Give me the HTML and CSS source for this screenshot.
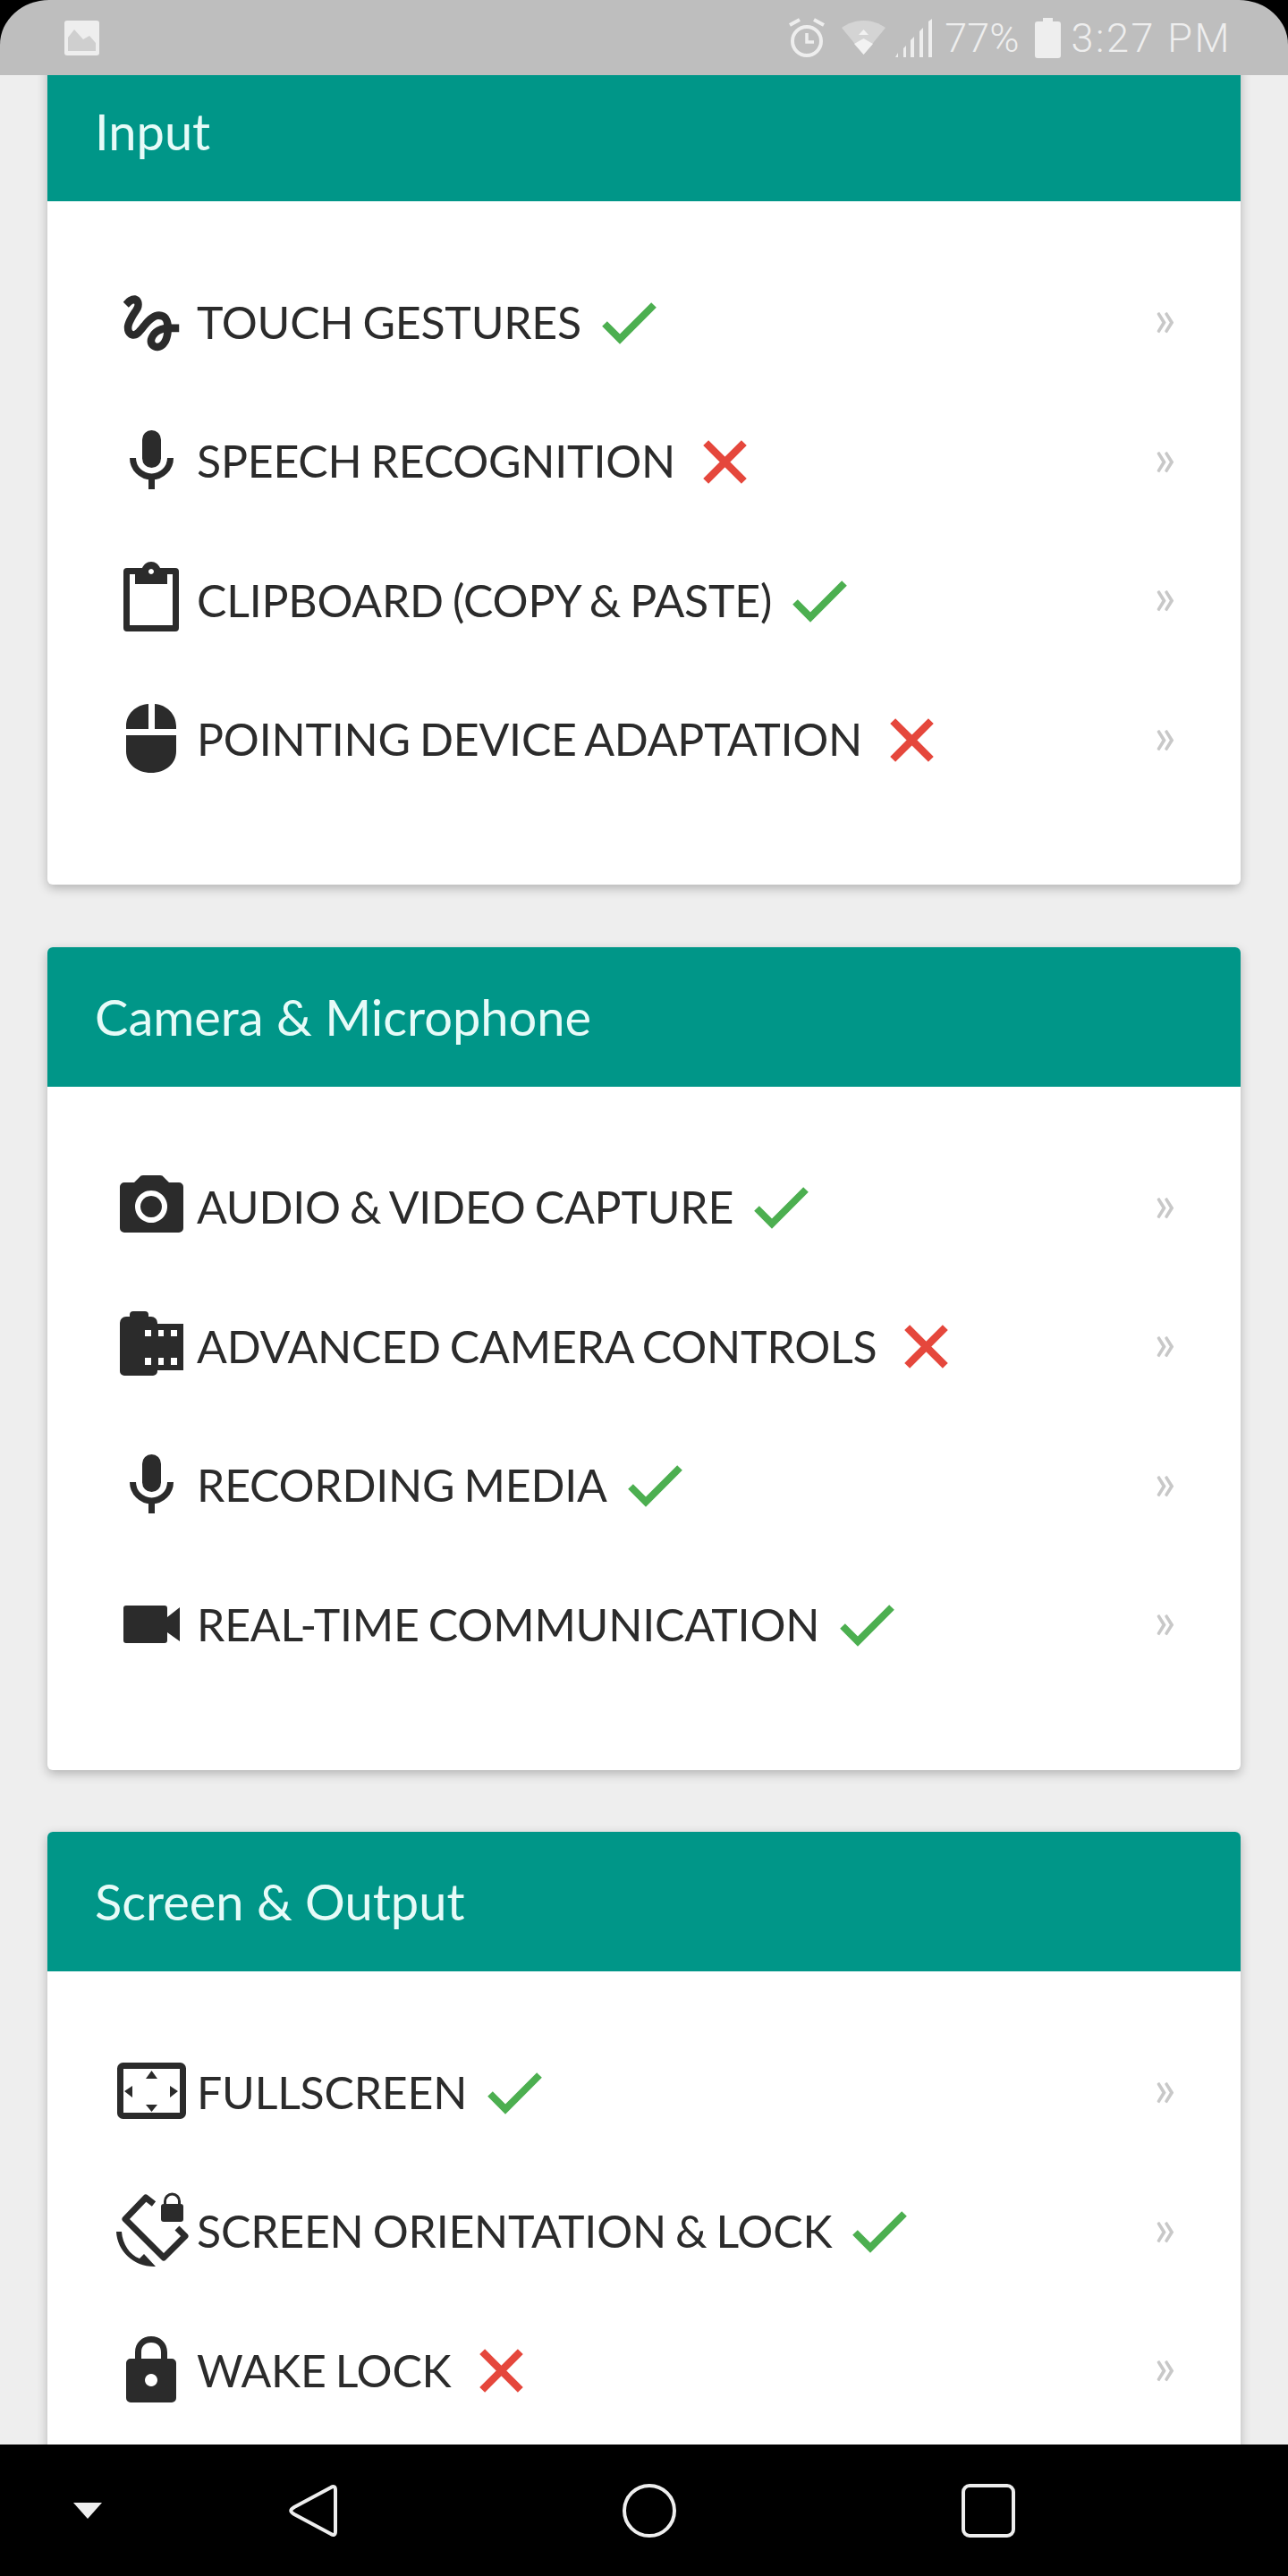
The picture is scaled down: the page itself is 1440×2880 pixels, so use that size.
FILE: index.html
```html
<!DOCTYPE html>
<html lang="en">
<head>
<meta charset="utf-8">
<title>Device features</title>
<link rel="stylesheet" href="styles.css">
</head>
<body>
<svg class="sprite" width="0" height="0" aria-hidden="true">
  <defs>
    <symbol id="yes" viewBox="0 0 61 47"><path d="M3 24 L20 41 L58 3" fill="none" stroke="#4caf50" stroke-width="8"/></symbol>
    <symbol id="no" viewBox="0 0 49 49"><path d="M4 4 L45 45 M45 4 L4 45" fill="none" stroke="#e5473c" stroke-width="8"/></symbol>
    <symbol id="mic" viewBox="0 0 80 80" overflow="visible"><rect x="31" y="6" width="21" height="42" rx="10.500" fill="#2b2b2b"/><path d="M20.500 37 a21 21 0 0 0 42 0" fill="none" stroke="#2b2b2b" stroke-width="7"/><rect x="38" y="58" width="7" height="14" fill="#2b2b2b"/></symbol>
  </defs>
</svg>

<header class="status">
  <div class="status-bar">
    <svg width="39" height="39" viewBox="0 0 39 39"><path d="M3 0H36a3 3 0 0 1 3 3V36a3 3 0 0 1-3 3H3a3 3 0 0 1-3-3V3a3 3 0 0 1 3-3Z" fill="#eee"/><path d="M4 19 11 10 21 21 28 17 35 25V34H4Z" fill="#cfcfcf"/></svg>
    <div class="st-right">
      <svg class="st-alarm" width="42" height="44" viewBox="0 0 42 44"><circle cx="21" cy="26" r="16" fill="none" stroke="#eee" stroke-width="4"/><path d="M21 17V27H29" fill="none" stroke="#eee" stroke-width="3.500"/><path d="M2 8 13 2M40 8 29 2" stroke="#eee" stroke-width="4"/></svg>
      <svg class="st-wifi" width="49" height="38" viewBox="0 0 49 38"><path d="M0 8C7 3 15 0 24.500 0S42 3 49 8L24.500 38Z" fill="#d4d4d4"/><path d="M24.500 10 19 16H30ZM14 26 24.500 38 35 26 24.500 20Z" fill="#f2f2f2"/></svg>
      <svg class="st-sig" width="43" height="43" viewBox="0 0 43 43"><path d="M0 43 3 38V43ZM9 43V33L12 30V43ZM17 43V24L21 20V43ZM27 43V14L31 10V43ZM37 43V3L41 0V43Z" fill="#eee"/></svg>
      <span class="st-pct">77%</span>
      <svg class="st-bat" width="29" height="45" viewBox="0 0 29 45"><path d="M9 0H20V4H26a3 3 0 0 1 3 3V42a3 3 0 0 1-3 3H3a3 3 0 0 1-3-3V7a3 3 0 0 1 3-3H9Z" fill="#eee"/></svg>
      <span class="st-time">3:27 PM</span>
    </div>
  </div>
</header>

<main class="page">
  <section class="card">
    <h2 class="card-title">Input</h2>
    <ul class="list">
      <li class="row"><span class="ic"><svg width="80" height="80" viewBox="0 0 80 80"><path transform="scale(3.440)" d="M4.590 6.890c.7-.71 1.400-1.350 1.710-1.220.5.2 0 1.030-.3 1.520-.25.42-2.860 3.890-2.860 6.310 0 1.280.48 2.340 1.340 2.980.75.56 1.740.73 2.640.46 1.070-.31 1.950-1.400 3.060-2.770 1.210-1.490 2.830-3.440 4.080-3.440 1.630 0 1.650 1.010 1.760 1.790-3.780.64-5.380 3.670-5.380 5.370 0 1.700 1.440 3.090 3.210 3.090 1.630 0 4.290-1.330 4.690-6.100H21v-2.500h-2.470c-.15-1.650-1.090-4.200-4.030-4.200-2.250 0-4.180 1.910-4.940 2.840-.58.73-2.060 2.480-2.290 2.720-.25.3-.68.84-1.110.84-.45 0-.72-.83-.36-1.920.35-1.090 1.400-2.860 1.850-3.520.78-1.140 1.300-1.920 1.300-3.280C8.950 3.690 7.310 3 6.440 3 5.120 3 3.970 4 3.720 4.250c-.36.36-.66.66-.88.93l1.750 1.710zm9.290 11.660c-.31 0-.74-.26-.74-.72 0-.6.73-2.200 2.870-2.760-.3 2.690-1.430 3.480-2.130 3.480z" fill="#2b2b2b"/></svg></span><span class="label">TOUCH GESTURES</span><svg class="mark-yes"><use href="#yes"/></svg><span class="more">»</span></li>
      <li class="row"><span class="ic"><svg width="80" height="80"><use href="#mic"/></svg></span><span class="label">SPEECH RECOGNITION</span><svg class="mark-no"><use href="#no"/></svg><span class="more">»</span></li>
      <li class="row"><span class="ic"><svg width="80" height="80" viewBox="0 0 80 80"><path fill-rule="evenodd" d="M14 4H31C33 0 36 -3 41 -3S49 0 51 4H68a4 4 0 0 1 4 4V71a4 4 0 0 1-4 4H14a4 4 0 0 1-4-4V8a4 4 0 0 1 4-4ZM17 11V68H65V11H59V22H23V11ZM41 5a3 3 0 1 0 .01 0Z" fill="#2b2b2b"/></svg></span><span class="label">CLIPBOARD (COPY &amp; PASTE)</span><svg class="mark-yes"><use href="#yes"/></svg><span class="more">»</span></li>
      <li class="row"><span class="ic"><svg width="80" height="80" viewBox="0 0 80 80"><path d="M38 1V29H13V26C13 12 24 2 38 1ZM45 1C58 2 69 12 69 26V29H45ZM13 36H69V54C69 68 57 78 41 78S13 68 13 54Z" fill="#2b2b2b"/></svg></span><span class="label">POINTING DEVICE ADAPTATION</span><svg class="mark-no"><use href="#no"/></svg><span class="more">»</span></li>
    </ul>
  </section>

  <section class="card">
    <h2 class="card-title">Camera &amp; Microphone</h2>
    <ul class="list">
      <li class="row"><span class="ic"><svg width="80" height="80" viewBox="0 0 80 80"><path fill-rule="evenodd" d="M11 13H22L28 7Q29 5 32 5H51Q54 5 55 7L61 13H72a5 5 0 0 1 5 5V64a5 5 0 0 1-5 5H11a5 5 0 0 1-5-5V18a5 5 0 0 1 5-5ZM41 22a18 18 0 1 0 .01 0ZM41 28a12 12 0 1 1-.01 0Z" fill="#2b2b2b"/></svg></span><span class="label">AUDIO &amp; VIDEO CAPTURE</span><svg class="mark-yes"><use href="#yes"/></svg><span class="more">»</span></li>
      <li class="row"><span class="ic"><svg width="80" height="80" viewBox="0 0 80 80"><path fill-rule="evenodd" d="M17 5a4 4 0 0 1 4-4H34a4 4 0 0 1 4 4V7H41a7 7 0 0 1 7 7V15H77V67H48V68a5 5 0 0 1-5 5H11a5 5 0 0 1-5-5V14a7 7 0 0 1 7-7H17ZM34 22v7h7v-7ZM49 22v7h6v-7ZM63 22v7h7v-7ZM34 53v8h7v-8ZM49 53v8h6v-8ZM63 53v8h7v-8Z" fill="#2b2b2b"/></svg></span><span class="label">ADVANCED CAMERA CONTROLS</span><svg class="mark-no"><use href="#no"/></svg><span class="more">»</span></li>
      <li class="row"><span class="ic"><svg width="80" height="80"><use href="#mic"/></svg></span><span class="label">RECORDING MEDIA</span><svg class="mark-yes"><use href="#yes"/></svg><span class="more">»</span></li>
      <li class="row"><span class="ic"><svg width="80" height="80" viewBox="0 0 80 80"><path d="M13 19H56a3 3 0 0 1 3 3V58a3 3 0 0 1-3 3H13a3 3 0 0 1-3-3V22a3 3 0 0 1 3-3ZM59 32 73 21V59L59 49Z" fill="#2b2b2b"/></svg></span><span class="label">REAL-TIME COMMUNICATION</span><svg class="mark-yes"><use href="#yes"/></svg><span class="more">»</span></li>
    </ul>
  </section>

  <section class="card">
    <h2 class="card-title">Screen &amp; Output</h2>
    <ul class="list">
      <li class="row"><span class="ic"><svg width="80" height="80" viewBox="0 0 80 80"><rect x="6.500" y="10.500" width="70" height="56" rx="3" fill="none" stroke="#2b2b2b" stroke-width="7"/><path d="M41.500 16 48 25H35ZM41.500 62 48 54H35ZM11 39 20 33V46ZM71 39 62 33V46Z" fill="#2b2b2b"/></svg></span><span class="label">FULLSCREEN</span><svg class="mark-yes"><use href="#yes"/></svg><span class="more">»</span></li>
      <li class="row"><span class="ic"><svg width="80" height="80" viewBox="0 0 80 80"><path d="M44 10 35 3 12 27 55 70 79 46 70 37" fill="none" stroke="#2b2b2b" stroke-width="7" stroke-linejoin="round"/><path d="M2 41H8C9 55 17 67 28 71L33 66 46 80C22 81 3 63 2 41Z" fill="#2b2b2b"/><rect x="52" y="10" width="25" height="20" rx="3" fill="#2b2b2b"/><path d="M56.500 12V7a8 8 0 0 1 16 0V12" fill="none" stroke="#2b2b2b" stroke-width="3"/></svg></span><span class="label">SCREEN ORIENTATION &amp; LOCK</span><svg class="mark-yes"><use href="#yes"/></svg><span class="more">»</span></li>
      <li class="row"><span class="ic"><svg width="80" height="80" viewBox="0 0 80 80"><path fill-rule="evenodd" d="M18 27H23V20C23 9 31 2 41 2S59 9 59 20V27H64a5 5 0 0 1 5 5V71a5 5 0 0 1-5 5H18a5 5 0 0 1-5-5V32a5 5 0 0 1 5-5ZM30 27H52V20C52 13 48 9 41 9S30 13 30 20ZM41 44a7 7 0 1 0 .01 0Z" fill="#2b2b2b"/></svg></span><span class="label">WAKE LOCK</span><svg class="mark-no"><use href="#no"/></svg><span class="more">»</span></li>
    </ul>
  </section>
</main>

<nav class="nav">
  <svg class="nav-menu" width="32" height="18" viewBox="0 0 32 18"><path d="M0 0H32L16 18Z" fill="#eee"/></svg>
  <svg class="nav-back" width="54" height="60" viewBox="0 0 54 60"><path d="M47 4C50 2 52 3 52 7V53C52 57 50 58 47 56L6 34C1 31 1 29 6 26Z" fill="none" stroke="#eee" stroke-width="4"/></svg>
  <svg class="nav-home" width="60" height="60" viewBox="0 0 60 60"><circle cx="30" cy="30" r="28" fill="none" stroke="#eee" stroke-width="4"/></svg>
  <svg class="nav-recent" width="60" height="60" viewBox="0 0 60 60"><rect x="2" y="2" width="56" height="56" rx="7" fill="none" stroke="#eee" stroke-width="4"/></svg>
</nav>
</body>
</html>
```

FILE: styles.css
```css
* { box-sizing: border-box; }
html, body { margin: 0; padding: 0; }
body {
  width: 1440px;
  height: 2880px;
  overflow: hidden;
  background: #eee;
  font-family: Lato, "Liberation Sans", sans-serif;
  color: #2b2b2b;
  position: relative;
}
.sprite { position: absolute; }

.status {
  position: absolute;
  top: 0;
  left: 0;
  width: 1440px;
  height: 84px;
  background: linear-gradient(#000 50px, #eee 50px);
  z-index: 2;
}
.status-bar {
  height: 84px;
  background: #bebebe;
  border-radius: 55px 55px 0 0 / 50px 50px 0 0;
  display: flex;
  justify-content: space-between;
  align-items: center;
  padding: 0 65px 0 72px;
  font-family: Roboto, sans-serif;
  font-size: 45px;
  font-weight: 300;
  color: #eee;
}
.status-bar svg { display: block; flex: none; }
.st-right { display: flex; align-items: center; }
.st-alarm { margin-right: -2px; }
.st-wifi { margin-left: 20px; }
.st-sig { margin-left: 11px; }
.st-pct { margin-left: 12px; }
.st-bat { margin-left: 17px; }
.st-time { margin-left: 12px; letter-spacing: 2.500px; margin-right: -2px; }

.page {
  padding: 69px 53px 0;
  display: flex;
  flex-direction: column;
  gap: 69.500px;
}
.card {
  background: #fff;
  border-radius: 6px;
  box-shadow: 0 4px 12px rgba(0,0,0,.25);
  overflow: hidden;
  flex: none;
  height: 920px;
}
.card-title {
  margin: 0;
  height: 156px;
  padding: 0 53px;
  background: #009688;
  color: #e6fbf8;
  font-size: 56px;
  font-weight: 400;
  line-height: 156px;
}
.list { list-style: none; margin: 0; padding: 57px 0 0 0; }
.row {
  height: 155.500px;
  display: flex;
  align-items: center;
  padding: 0 72px 0 75px;
}
.ic { width: 80px; height: 80px; flex: none; margin-right: 12px; display: block; }
.ic svg { display: block; overflow: visible; }
.label {
  font-size: 50px;
  line-height: 60px;
  white-space: nowrap;
  letter-spacing: -0.200px;
  word-spacing: -2.500px;
}
.mark-yes { width: 61px; height: 47px; margin: 3px 0 0 23px; flex: none; }
.mark-no { width: 51px; height: 51px; margin: 2px 0 0 30px; flex: none; }
.more {
  margin-left: auto;
  padding-bottom: 11px;
  color: #c8c8c8;
  font-size: 58px;
  line-height: 60px;
  font-weight: 400;
}

.nav {
  position: absolute;
  left: 0;
  bottom: 0;
  width: 1440px;
  height: 147px;
  background: #000;
  z-index: 2;
  display: flex;
  align-items: center;
}
.nav-menu { margin-left: 82px; }
.nav-back { margin-left: 209px; }
.nav-home { margin-left: 319px; }
.nav-recent { margin-left: 319px; }
```
